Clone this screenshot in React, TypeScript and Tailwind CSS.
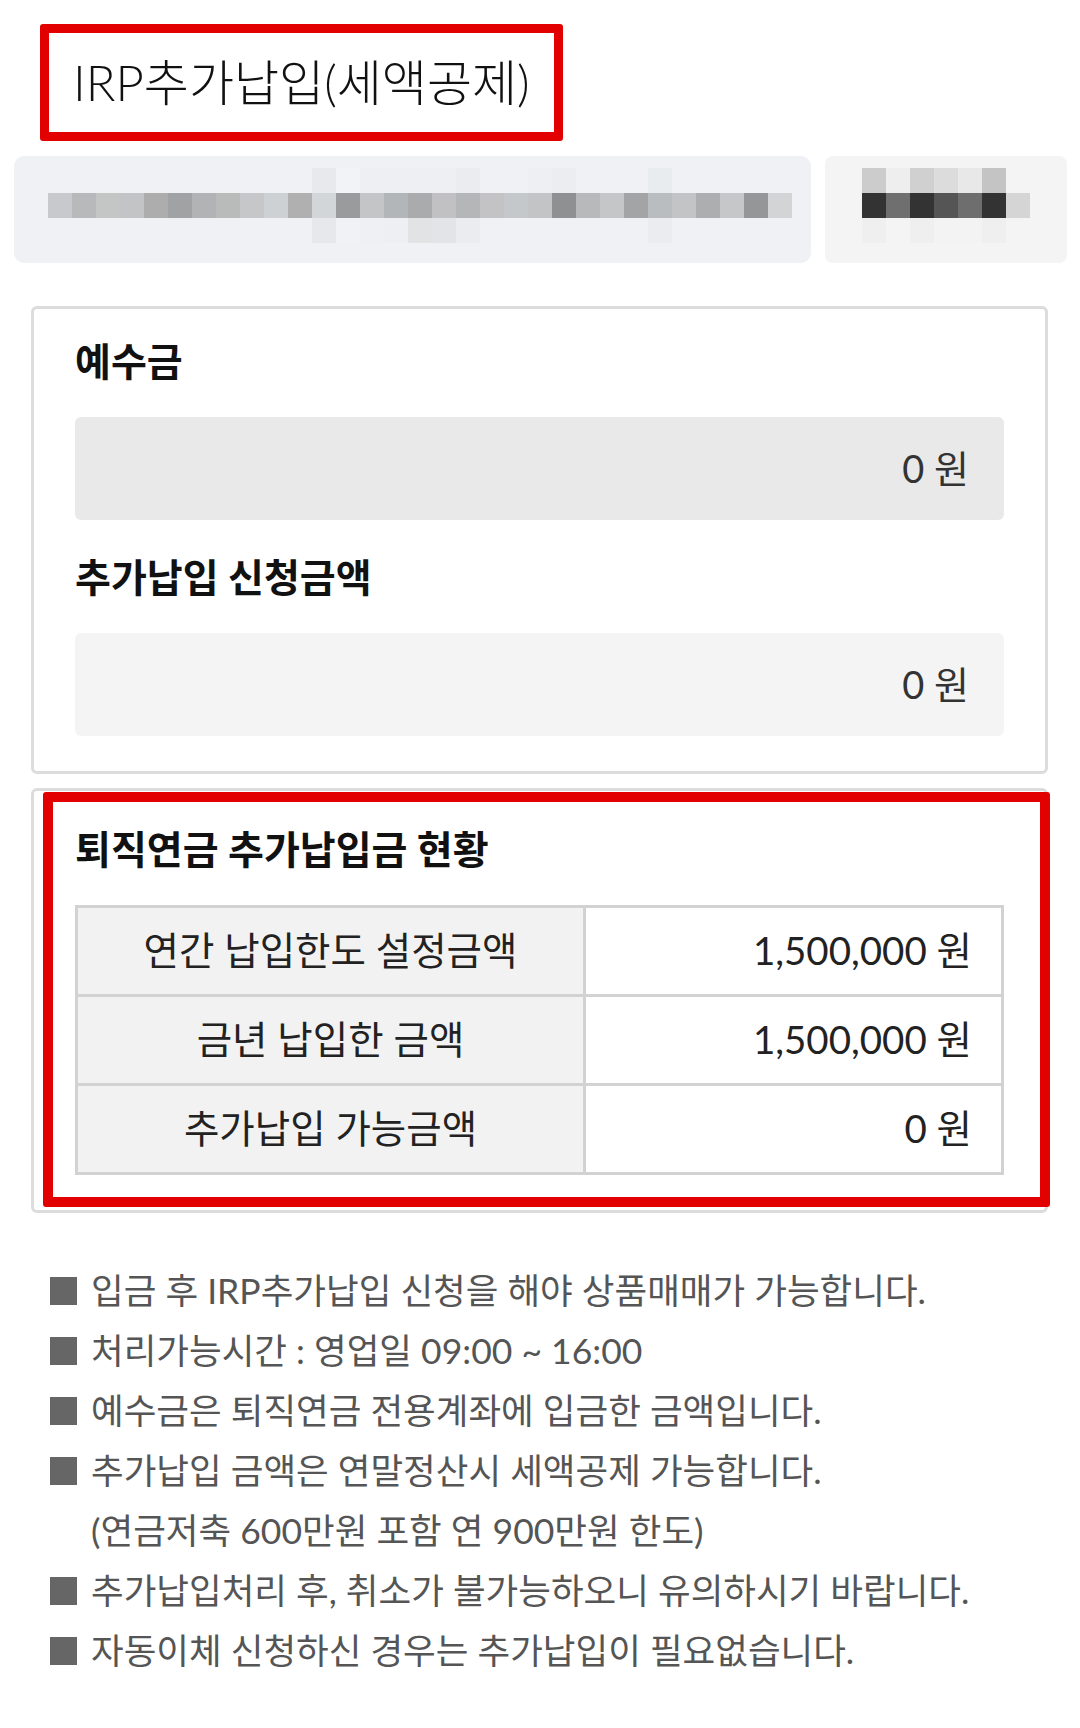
import React from "react";

const FONT = "font-['Lato','Noto_Sans_CJK_KR',sans-serif]";

// pixelated account bar (blurred out in the screenshot)
const acctTop = [
  "bg-[#f0f1f4]", "bg-[#f0f1f4]", "bg-[#f0f1f4]", "bg-[#f0f1f4]", "bg-[#f0f1f4]", "bg-[#f0f1f4]",
  "bg-[#f0f1f4]", "bg-[#f0f1f4]", "bg-[#f0f1f4]", "bg-[#f0f1f4]", "bg-[#f0f1f4]", "bg-[#e8e9ec]",
  "bg-[#f2f3f6]", "bg-[#eeeff2]", "bg-[#eeeff2]", "bg-[#eeeff2]", "bg-[#eeeff2]", "bg-[#ebecef]",
  "bg-[#f0f1f4]", "bg-[#f0f1f4]", "bg-[#eeeff2]", "bg-[#ecedf0]", "bg-[#f0f1f4]", "bg-[#f0f1f4]",
  "bg-[#f0f1f4]", "bg-[#e9ecef]", "bg-[#f0f1f4]", "bg-[#f0f1f4]", "bg-[#f0f1f4]", "bg-[#f0f1f4]",
  "bg-[#f0f1f4]",
];
const acctMid = [
  "bg-[#c8c9cc]", "bg-[#b8b9bb]", "bg-[#c4c6c6]", "bg-[#c3c4c6]", "bg-[#adadae]", "bg-[#a0a2a3]",
  "bg-[#b2b3b4]", "bg-[#b9bbbb]", "bg-[#c6c7c8]", "bg-[#ced1d3]", "bg-[#b0b0b1]", "bg-[#d3d6d9]",
  "bg-[#9a9b9c]", "bg-[#c3c5c6]", "bg-[#b3b6b8]", "bg-[#aaabac]", "bg-[#c1c1c3]", "bg-[#b5b6b7]",
  "bg-[#c3c3c6]", "bg-[#c5c8ca]", "bg-[#c3c4c5]", "bg-[#8f9091]", "bg-[#b8b9ba]", "bg-[#c5c6c7]",
  "bg-[#a3a4a5]", "bg-[#b9bdbf]", "bg-[#c3c4c5]", "bg-[#adaeaf]", "bg-[#c6c7c8]", "bg-[#959697]",
  "bg-[#d3d4d5]",
];
const acctBot = [
  "bg-[#f0f1f4]", "bg-[#f0f1f4]", "bg-[#f0f1f4]", "bg-[#f0f1f4]", "bg-[#f0f1f4]", "bg-[#f0f1f4]",
  "bg-[#f0f1f4]", "bg-[#f0f1f4]", "bg-[#f0f1f4]", "bg-[#f0f1f4]", "bg-[#f0f1f4]", "bg-[#e7e8eb]",
  "bg-[#f1f2f5]", "bg-[#eff0f3]", "bg-[#eeeff2]", "bg-[#e2e3e5]", "bg-[#e3e4e7]", "bg-[#ebecef]",
  "bg-[#f0f1f4]", "bg-[#f0f1f4]", "bg-[#f0f1f4]", "bg-[#f0f1f4]", "bg-[#f0f1f4]", "bg-[#f0f1f4]",
  "bg-[#f0f1f4]", "bg-[#ebecef]", "bg-[#f0f1f4]", "bg-[#f0f1f4]", "bg-[#f0f1f4]", "bg-[#f0f1f4]",
  "bg-[#f0f1f4]",
];
const nameTop = ["bg-[#cccccc]", "bg-[#eeeeee]", "bg-[#d0d0d0]", "bg-[#dcdcdc]", "bg-[#e8e8e8]", "bg-[#c4c4c4]", "bg-[#f4f4f4]"];
const nameMid = ["bg-[#333333]", "bg-[#6f6f6f]", "bg-[#333333]", "bg-[#555555]", "bg-[#6e6e6e]", "bg-[#333333]", "bg-[#d5d5d5]"];
const nameBot = ["bg-[#efefef]", "bg-[#f4f4f4]", "bg-[#efefef]", "bg-[#f3f3f3]", "bg-[#f3f3f3]", "bg-[#efefef]", "bg-[#f4f4f4]"];

function Mosaic({ rows }: { rows: string[][] }) {
  return (
    <div className="flex flex-col">
      {rows.map((row, i) => (
        <div key={i} className="flex">
          {row.map((c, j) => (
            <div key={j} className={`w-[24px] h-[25px] ${c}`} />
          ))}
        </div>
      ))}
    </div>
  );
}

function AmountBox({ bg }: { bg: string }) {
  return (
    <div className={`h-[103px] rounded-[6px] ${bg} flex items-center justify-end pr-[35px]`}>
      <span className="text-[38px] text-[#333]">0 원</span>
    </div>
  );
}

const rows = [
  { label: "연간 납입한도 설정금액", value: "1,500,000 원" },
  { label: "금년 납입한 금액", value: "1,500,000 원" },
  { label: "추가납입 가능금액", value: "0 원" },
];

const notes = [
  { bullet: true, text: "입금 후 IRP추가납입 신청을 해야 상품매매가 가능합니다." },
  { bullet: true, text: "처리가능시간 : 영업일 09:00 ~ 16:00" },
  { bullet: true, text: "예수금은 퇴직연금 전용계좌에 입금한 금액입니다." },
  { bullet: true, text: "추가납입 금액은 연말정산시 세액공제 가능합니다." },
  { bullet: false, text: "(연금저축 600만원 포함 연 900만원 한도)" },
  { bullet: true, text: "추가납입처리 후, 취소가 불가능하오니 유의하시기 바랍니다." },
  { bullet: true, text: "자동이체 신청하신 경우는 추가납입이 필요없습니다." },
];

export default function App() {
  return (
    <div className={`w-[1080px] h-[1728px] bg-white overflow-hidden ${FONT}`}>
      {/* title with red highlight */}
      <div className="pt-[24px] pl-[40px]">
        <div className="w-[523px] h-[117px] border-[9px] border-[#e30000] rounded-[3px] flex items-center pl-[24px]">
          <h1 className="text-[49px] font-light text-[#111] leading-none">IRP추가납입(세액공제)</h1>
        </div>
      </div>

      {/* blurred account selector */}
      <div className="mt-[15px] flex gap-[14px] pl-[14px]">
        <div className="w-[797px] h-[107px] rounded-[10px] bg-[#f0f1f4] pt-[12px] pl-[34px]">
          <Mosaic rows={[acctTop, acctMid, acctBot]} />
        </div>
        <div className="w-[242px] h-[107px] rounded-[8px] bg-[#f4f4f4] pt-[12px] pl-[37px]">
          <Mosaic rows={[nameTop, nameMid, nameBot]} />
        </div>
      </div>

      {/* balances */}
      <div className="mt-[43px] ml-[31px] w-[1017px] border-[3px] border-[#dcdcdc] rounded-[6px] px-[41px] pt-[30px] pb-[35px]">
        <h2 className="text-[39px] font-bold text-[#111] leading-[44px]">예수금</h2>
        <div className="mt-[34px]">
          <AmountBox bg="bg-[#e9e9e9]" />
        </div>
        <h2 className="mt-[35px] text-[39px] font-bold text-[#111] leading-[44px]">추가납입 신청금액</h2>
        <div className="mt-[34px]">
          <AmountBox bg="bg-[#f4f4f4]" />
        </div>
      </div>

      {/* contribution status */}
      <div className="relative mt-[14px] ml-[31px] w-[1017px] border-[3px] border-[#dcdcdc] rounded-[6px] px-[41px] pt-[36px] pb-[35px]">
        <h2 className="text-[39px] font-bold text-[#111] leading-[44px]">퇴직연금 추가납입금 현황</h2>
        <table className="mt-[34px] w-full border-collapse">
          <tbody>
            {rows.map((r) => (
              <tr key={r.label} className="h-[89px]">
                <td className="w-[508px] border-[3px] border-[#d2d2d2] bg-[#f2f2f2] text-center text-[38.5px] text-[#222]">
                  {r.label}
                </td>
                <td className="border-[3px] border-[#d2d2d2] bg-white text-right pr-[29px] text-[38.5px] text-[#222]">
                  {r.value}
                </td>
              </tr>
            ))}
          </tbody>
        </table>
        <div className="absolute left-[9px] top-[1px] right-[-5px] bottom-[3px] border-[10px] border-[#e30000] rounded-[3px] pointer-events-none" />
      </div>

      {/* notes */}
      <ul className="mt-[48px] pl-[50px] flex flex-col">
        {notes.map((n, i) => (
          <li key={i} className="flex items-center h-[60px]">
            <span className={`w-[27px] h-[28px] mr-[14px] ${n.bullet ? "bg-[#666]" : ""}`} />
            <span className="text-[35.5px] text-[#555] whitespace-nowrap">{n.text}</span>
          </li>
        ))}
      </ul>
    </div>
  );
}
